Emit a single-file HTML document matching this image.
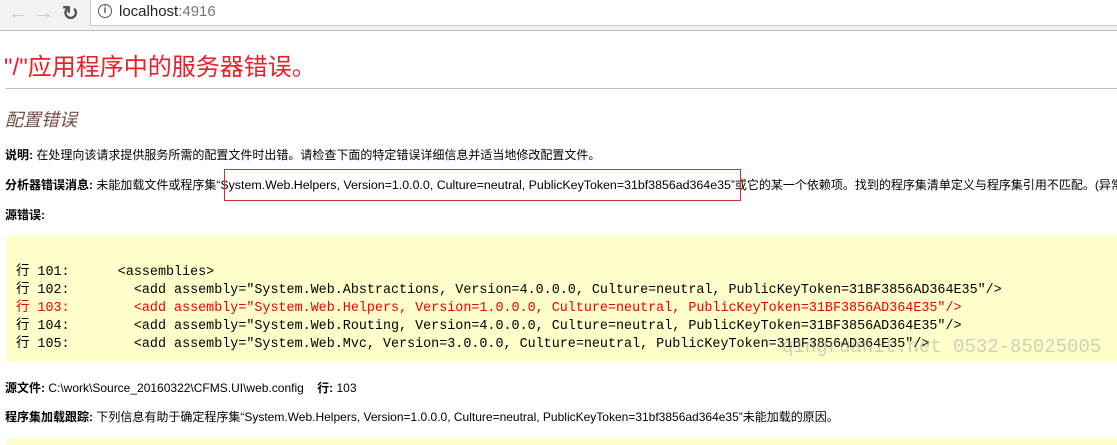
<!DOCTYPE html><html><head><meta charset="utf-8"><style>
html,body{margin:0;width:1117px;height:445px;overflow:hidden}
body{background:#fff;font-family:"Liberation Sans","Noto Sans CJK SC",sans-serif;position:relative}
.bar{position:absolute;left:0;top:0;width:1117px;height:30px;background:#f2f2f2;border-bottom:1px solid #bbb}
.url{position:absolute;left:90px;top:0;width:1027px;height:25px;background:#fff;border-left:1px solid #ccc;border-bottom:1px solid #ccc}
.t{position:absolute;white-space:nowrap}
.s{font-size:12px;color:#000}
.clip{position:absolute;left:0;top:0;width:1117px;height:445px;overflow:hidden}
.code{position:absolute;left:6px;top:235px;width:1111px;height:127px;background:#ffffcc}
pre{margin:0;font-family:"Liberation Mono","Noto Sans CJK SC",monospace;font-size:13.4px;line-height:18px;position:absolute;left:10px;top:29px;color:#000}
</style></head><body><div class="clip">
<div class="bar"></div>
<div class="url"></div>
<div class="t" style="left:8px;top:2px;font-size:20px;color:#ccc">&#8592;</div>
<div class="t" style="left:34px;top:2px;font-size:20px;color:#ccc">&#8594;</div>
<div class="t" style="left:62px;top:1px;font-size:20px;color:#555;font-weight:bold">&#8635;</div>
<div class="t" style="left:98px;top:4px;width:12px;height:12px;border:1.5px solid #555;border-radius:50%;font-size:10px;line-height:12px;text-align:center;color:#555;font-weight:bold">i</div>
<div class="t" style="left:119px;top:3px;font-size:15px;color:#222">localhost<span style="color:#777">:4916</span></div>
<div class="t" style="left:4px;top:47px;font-size:24px;color:#e8202a">"/"应用程序中的服务器错误。</div>
<div style="position:absolute;left:5px;top:88px;width:1112px;height:1px;background:#c0c0c0"></div>
<div class="t" style="left:5px;top:106px;font-size:18px;color:#7a4a4a;font-style:italic">配置错误</div>
<div class="t s" style="left:5px;top:146px"><b>说明:</b> 在处理向该请求提供服务所需的配置文件时出错。请检查下面的特定错误详细信息并适当地修改配置文件。</div>
<div class="t s" style="left:5px;top:176px"><b>分析器错误消息:</b> 未能加载文件或程序集“<span style="font-size:12.4px">System.Web.Helpers, Version=1.0.0.0, Culture=neutral, PublicKeyToken=31bf3856ad364e35</span>”或它的某一个依赖项。找到的程序集清单定义与程序集引用不匹配。(异常来自 HRESULT)</div>
<div style="position:absolute;left:224px;top:169px;width:515px;height:30px;border:1px solid #d03030"></div>
<div class="t s" style="left:5px;top:206px"><b>源错误:</b></div>
<div class="code"><pre>行 101:      &lt;assemblies&gt;
行 102:        &lt;add assembly="System.Web.Abstractions, Version=4.0.0.0, Culture=neutral, PublicKeyToken=31BF3856AD364E35"/&gt;
<span style="color:#e00">行 103:        &lt;add assembly="System.Web.Helpers, Version=1.0.0.0, Culture=neutral, PublicKeyToken=31BF3856AD364E35"/&gt;</span>
行 104:        &lt;add assembly="System.Web.Routing, Version=4.0.0.0, Culture=neutral, PublicKeyToken=31BF3856AD364E35"/&gt;
行 105:        &lt;add assembly="System.Web.Mvc, Version=3.0.0.0, Culture=neutral, PublicKeyToken=31BF3856AD364E35"/&gt;</pre></div>
<div class="t" style="left:782px;top:336px;font-family:'Liberation Mono',monospace;font-size:19px;color:rgba(150,150,150,0.45)">qingruanit.net 0532-85025005</div>
<div class="t s" style="left:5px;top:379px"><b>源文件:</b> C:\work\Source_20160322\CFMS.UI\web.config &nbsp;&nbsp; <b>行:</b> 103</div>
<div class="t s" style="left:5px;top:408px"><b>程序集加载跟踪:</b> 下列信息有助于确定程序集“System.Web.Helpers, Version=1.0.0.0, Culture=neutral, PublicKeyToken=31bf3856ad364e35”未能加载的原因。</div>
<div style="position:absolute;left:6px;top:438px;width:1111px;height:7px;background:#ffffcc"></div>
</div></body></html>
